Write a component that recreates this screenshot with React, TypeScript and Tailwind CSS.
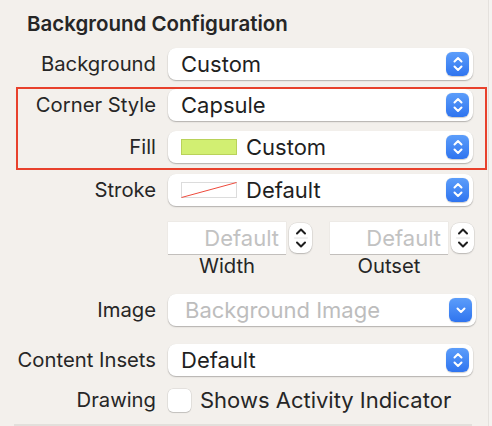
import type { ReactNode } from 'react';

const font = { fontFamily: 'Inter, "Noto Sans", "Liberation Sans", sans-serif' };

const BlueStepper = () => (
  <span className="flex h-6 w-[23px] shrink-0 items-center justify-center rounded-[6px] bg-gradient-to-b from-[#5c9dfa] to-[#2f74ef] shadow-[0_0.5px_1px_rgba(0,0,0,0.2)]">
    <svg width="12" height="16" viewBox="0 0 12 16" fill="none" stroke="white" strokeWidth="2" strokeLinecap="round" strokeLinejoin="round">
      <path d="M2.5 5.5 6 2l3.5 3.5" />
      <path d="M2.5 10.5 6 14l3.5-3.5" />
    </svg>
  </span>
);

const BlueChevron = () => (
  <span className="flex h-6 w-[23px] shrink-0 items-center justify-center rounded-[6px] bg-gradient-to-b from-[#5c9dfa] to-[#2f74ef] shadow-[0_0.5px_1px_rgba(0,0,0,0.2)]">
    <svg width="12" height="10" viewBox="0 0 12 10" fill="none" stroke="white" strokeWidth="2" strokeLinecap="round" strokeLinejoin="round">
      <path d="M2.5 3.5 6 7l3.5-3.5" />
    </svg>
  </span>
);

const Popup = ({ children, pull = false }: { children: ReactNode; pull?: boolean }) => (
  <div
    className={`flex h-8 items-center rounded-[8px] bg-white pl-[13px] pr-[4px] shadow-[0_0.5px_0_0.5px_rgba(0,0,0,0.06),0_1px_1.5px_rgba(0,0,0,0.22)] ${
      pull ? 'w-[308px]' : 'w-[305px]'
    }`}
  >
    <div className="flex flex-1 items-center">{children}</div>
    {pull ? <BlueChevron /> : <BlueStepper />}
  </div>
);

const Row = ({ label, children, labelW = 156 }: { label: string; children: ReactNode; labelW?: number }) => (
  <div className="flex items-center">
    <div
      className="shrink-0 whitespace-nowrap text-right text-[20.25px] leading-6 text-[#262626]"
      style={{ width: labelW }}
    >
      {label}
    </div>
    <div className="ml-3">{children}</div>
  </div>
);

const NumberStepper = () => (
  <span className="flex h-[30px] w-[23px] flex-col items-center justify-center rounded-[8px] bg-white shadow-[0_0_0_0.5px_rgba(0,0,0,0.1),0_1px_1.5px_rgba(0,0,0,0.2)]">
    <svg width="14" height="28" viewBox="0 0 14 28" fill="none" stroke="#1e1e1e" strokeWidth="2" strokeLinecap="round" strokeLinejoin="round">
      <path d="M3 9.5 7 5.5l4 4" />
      <path d="M0.5 14h13" stroke="#e2e2e2" strokeWidth="1" />
      <path d="M3 18.5 7 22.5l4-4" />
    </svg>
  </span>
);

const NumberField = ({ label }: { label: string }) => (
  <div className="flex flex-col">
    <div className="flex items-center gap-[3px]">
      <div className="flex h-8 w-[118px] items-center justify-end bg-white pr-[7px] text-[22px] leading-6 text-[#c2c2c2] shadow-[0_0_0_0.5px_rgba(0,0,0,0.05),0_1px_0_rgba(0,0,0,0.18)]">
        Default
      </div>
      <NumberStepper />
    </div>
    <div className="mt-[2px] w-[118px] text-center text-[20.25px] leading-5 text-[#262626]">{label}</div>
  </div>
);

const App = () => {
  return (
    <div className="flex h-[426px] w-[492px] bg-[#f3f0ec]" style={font}>
      <div className="flex w-[488px] flex-col">
        <div className="mt-3 pl-[27px] text-[20.5px] font-semibold leading-6 text-[#262626]">
          Background Configuration
        </div>

        <div className="mt-3">
          <Row label="Background">
            <Popup>
              <span className="text-[22px] leading-6 text-[#1f1f1f]">Custom</span>
            </Popup>
          </Row>
        </div>

        <div className="ml-4 mr-[1px] mt-[7px] flex flex-col gap-[10px] border-2 border-[#e8412c] pb-[5px]">
          <Row label="Corner Style" labelW={138}>
            <Popup>
              <span className="text-[22px] leading-6 text-[#1f1f1f]">Capsule</span>
            </Popup>
          </Row>
          <Row label="Fill" labelW={138}>
            <Popup>
              <span className="h-4 w-14 shrink-0 border border-[#b9d25a] bg-[#d2ef72]" />
              <span className="ml-[9px] text-[22px] leading-6 text-[#1f1f1f]">Custom</span>
            </Popup>
          </Row>
        </div>

        <div className="mt-1">
          <Row label="Stroke">
            <Popup>
              <svg width="56" height="16" viewBox="0 0 56 16" className="shrink-0">
                <rect x="0.5" y="0.5" width="55" height="15" fill="white" stroke="#dcdcdc" />
                <path d="M0.5 15.5 55.5 0.5" stroke="#ee4a3c" strokeWidth="1" />
              </svg>
              <span className="ml-[9px] text-[22px] leading-6 text-[#1f1f1f]">Default</span>
            </Popup>
          </Row>
        </div>

        <div className="mt-4 flex gap-[18px] pl-[168px]">
          <NumberField label="Width" />
          <NumberField label="Outset" />
        </div>

        <div className="mt-[18px]">
          <Row label="Image">
            <Popup pull>
              <span className="pl-[4px] text-[22px] leading-6 text-[#bdbdbd]">Background Image</span>
            </Popup>
          </Row>
        </div>

        <div className="mt-[18px]">
          <Row label="Content Insets">
            <Popup>
              <span className="text-[22px] leading-6 text-[#1f1f1f]">Default</span>
            </Popup>
          </Row>
        </div>

        <div className="mt-3">
          <Row label="Drawing">
            <div className="flex items-center">
              <span className="h-[23px] w-[23px] rounded-[5px] bg-white shadow-[0_0_0_0.5px_rgba(0,0,0,0.12),0_1px_1px_rgba(0,0,0,0.15)]" />
              <span className="ml-[9px] text-[22px] leading-6 text-[#262626]">Shows Activity Indicator</span>
            </div>
          </Row>
        </div>

        <div className="ml-[14px] mt-3 h-[2px] w-[458px] bg-[#e2dfdb]" />
      </div>
      <div className="flex-1 border-l border-[#e4e1dd] bg-[#f5f3f0]" />
    </div>
  );
};

export default App;
